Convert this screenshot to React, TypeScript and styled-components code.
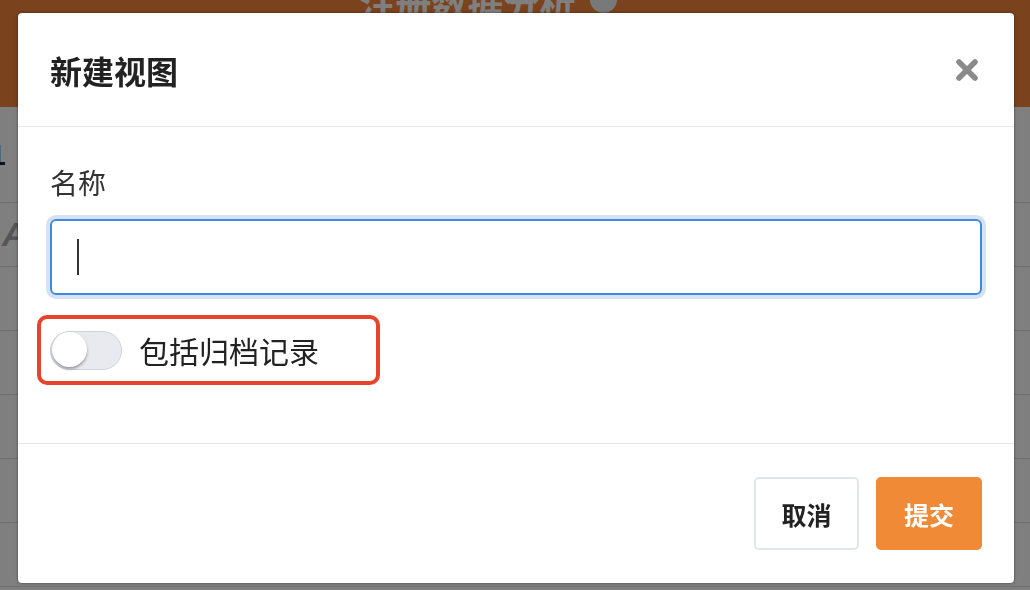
import React from "react";
import styled, { createGlobalStyle } from "styled-components";

const GlobalStyle = createGlobalStyle`
  html, body {
    margin: 0;
    padding: 0;
    width: 1030px;
    height: 590px;
    overflow: hidden;
    font-family: "Noto Sans CJK SC", "Noto Sans", "Liberation Sans", sans-serif;
  }
`;

// Página de fundo (atrás do modal)
const Page = styled.div`
  width: 1030px;
  height: 590px;
  background: #ffffff;
  overflow: hidden;
`;

const TopBar = styled.header`
  height: 107px;
  padding-right: 54px;
  background: #f4843a;
  display: flex;
  justify-content: center;
  align-items: flex-start;
  gap: 14px;
  color: #ffffff;
`;

const PageTitle = styled.h1`
  margin: -16px 0 0 0;
  font-size: 36px;
  line-height: 36px;
  font-weight: 700;
`;

const InfoDot = styled.span`
  margin-top: -14px;
  width: 27px;
  height: 27px;
  border-radius: 50%;
  background: #f2f2f2;
`;

const Table = styled.div`
  display: flex;
  flex-direction: column;
`;

const Row = styled.div<{ $tall?: boolean }>`
  height: ${(p) => (p.$tall ? "95px" : "63px")};
  border-bottom: 1px solid #dcdcdc;
  display: flex;
  align-items: center;
`;

const Cell = styled.span<{ $muted?: boolean }>`
  font-family: "Liberation Sans", sans-serif;
  font-weight: 700;
  font-size: ${(p) => (p.$muted ? "34px" : "30px")};
  color: ${(p) => (p.$muted ? "#aaaaaa" : "#222222")};
  margin-left: ${(p) => (p.$muted ? "2px" : "-11px")};
  font-style: ${(p) => (p.$muted ? "italic" : "normal")};
`;

// Camada escura e o modal por cima
const Overlay = styled.div`
  position: fixed;
  inset: 0;
  background: rgba(0, 0, 0, 0.5);
  display: flex;
  align-items: flex-start;
  padding: 13px 16px 0 18px;
`;

const Modal = styled.div`
  flex: 1;
  background: #ffffff;
  border-radius: 4px;
  box-shadow: 0 0 3px rgba(0, 0, 0, 0.5);
  display: flex;
  flex-direction: column;
`;

const ModalHeader = styled.div`
  height: 113px;
  padding: 0 36px 0 32px;
  border-bottom: 1px solid #e6e7eb;
  display: flex;
  align-items: center;
  justify-content: space-between;
`;

const ModalTitle = styled.h2`
  margin: 0;
  font-size: 32px;
  font-weight: 700;
  color: #222222;
`;

const CloseButton = styled.button`
  border: none;
  background: none;
  padding: 0;
  width: 22px;
  height: 22px;
  display: flex;
  cursor: pointer;
`;

const ModalBody = styled.div`
  padding: 38px 32px 58px;
  border-bottom: 1px solid #e6e7eb;
  display: flex;
  flex-direction: column;
`;

const Label = styled.label`
  font-size: 28px;
  line-height: 34px;
  color: #333333;
`;

const InputBox = styled.div`
  margin-top: 20px;
  height: 72px;
  border: 2px solid #3f8ae0;
  border-radius: 6px;
  box-shadow: 0 0 0 4px #d4e2f4;
  display: flex;
  align-items: center;
  padding-left: 25px;
`;

const Caret = styled.span`
  width: 2px;
  height: 36px;
  background: #333333;
`;

const ToggleRow = styled.div`
  position: relative;
  margin-top: 20px;
  height: 70px;
  display: flex;
  align-items: center;
  gap: 17px;
`;

// Destaque vermelho (anotação por cima do conteúdo)
const Highlight = styled.div`
  position: absolute;
  left: -13px;
  top: 0;
  width: 343px;
  height: 70px;
  box-sizing: border-box;
  border: 4px solid #e8432b;
  border-radius: 10px;
  pointer-events: none;
`;

const Track = styled.span<{ $on: boolean }>`
  position: relative;
  width: 72px;
  height: 39px;
  box-sizing: border-box;
  border-radius: 20px;
  border: 1.5px solid #cdd3dc;
  background: ${(p) => (p.$on ? "#f08a36" : "#e9eaef")};
`;

const Knob = styled.span<{ $on: boolean }>`
  position: absolute;
  top: 0.5px;
  left: ${(p) => (p.$on ? "34px" : "1px")};
  width: 35px;
  height: 35px;
  border-radius: 50%;
  background: #ffffff;
  box-shadow: 0 2px 3px rgba(0, 0, 0, 0.35);
`;

const ToggleLabel = styled.span`
  font-size: 30px;
  color: #222222;
`;

const ModalFooter = styled.div`
  padding: 33px 32px;
  display: flex;
  justify-content: flex-end;
  gap: 17px;
`;

const Button = styled.button<{ $primary?: boolean }>`
  height: 73px;
  width: ${(p) => (p.$primary ? "106px" : "105px")};
  border-radius: 5px;
  border: 2px solid ${(p) => (p.$primary ? "#f08a36" : "#e1e6ec")};
  background: ${(p) => (p.$primary ? "#f08a36" : "#ffffff")};
  color: ${(p) => (p.$primary ? "#ffffff" : "#222222")};
  font-family: "Noto Sans CJK SC", sans-serif;
  font-size: 25px;
  font-weight: 700;
  cursor: pointer;
`;

export default function App() {
  const [archived, setArchived] = React.useState(false);

  return (
    <>
      <GlobalStyle />
      <Page>
        <TopBar>
          <PageTitle>注册数据分析</PageTitle>
          <InfoDot />
        </TopBar>
        <Table>
          <Row $tall>
            <Cell>1</Cell>
          </Row>
          <Row>
            <Cell $muted>A</Cell>
          </Row>
          <Row />
          <Row />
          <Row />
          <Row />
          <Row />
        </Table>
      </Page>
      <Overlay>
        <Modal>
          <ModalHeader>
            <ModalTitle>新建视图</ModalTitle>
            <CloseButton aria-label="close">
              <svg width="22" height="22" viewBox="0 0 22 22">
                <path
                  d="M3 3 L19 19 M19 3 L3 19"
                  stroke="#8a8a8a"
                  strokeWidth="5.5"
                  strokeLinecap="round"
                />
              </svg>
            </CloseButton>
          </ModalHeader>
          <ModalBody>
            <Label>名称</Label>
            <InputBox>
              <Caret />
            </InputBox>
            <ToggleRow onClick={() => setArchived(!archived)}>
              <Track $on={archived}>
                <Knob $on={archived} />
              </Track>
              <ToggleLabel>包括归档记录</ToggleLabel>
              <Highlight />
            </ToggleRow>
          </ModalBody>
          <ModalFooter>
            <Button>取消</Button>
            <Button $primary>提交</Button>
          </ModalFooter>
        </Modal>
      </Overlay>
    </>
  );
}
